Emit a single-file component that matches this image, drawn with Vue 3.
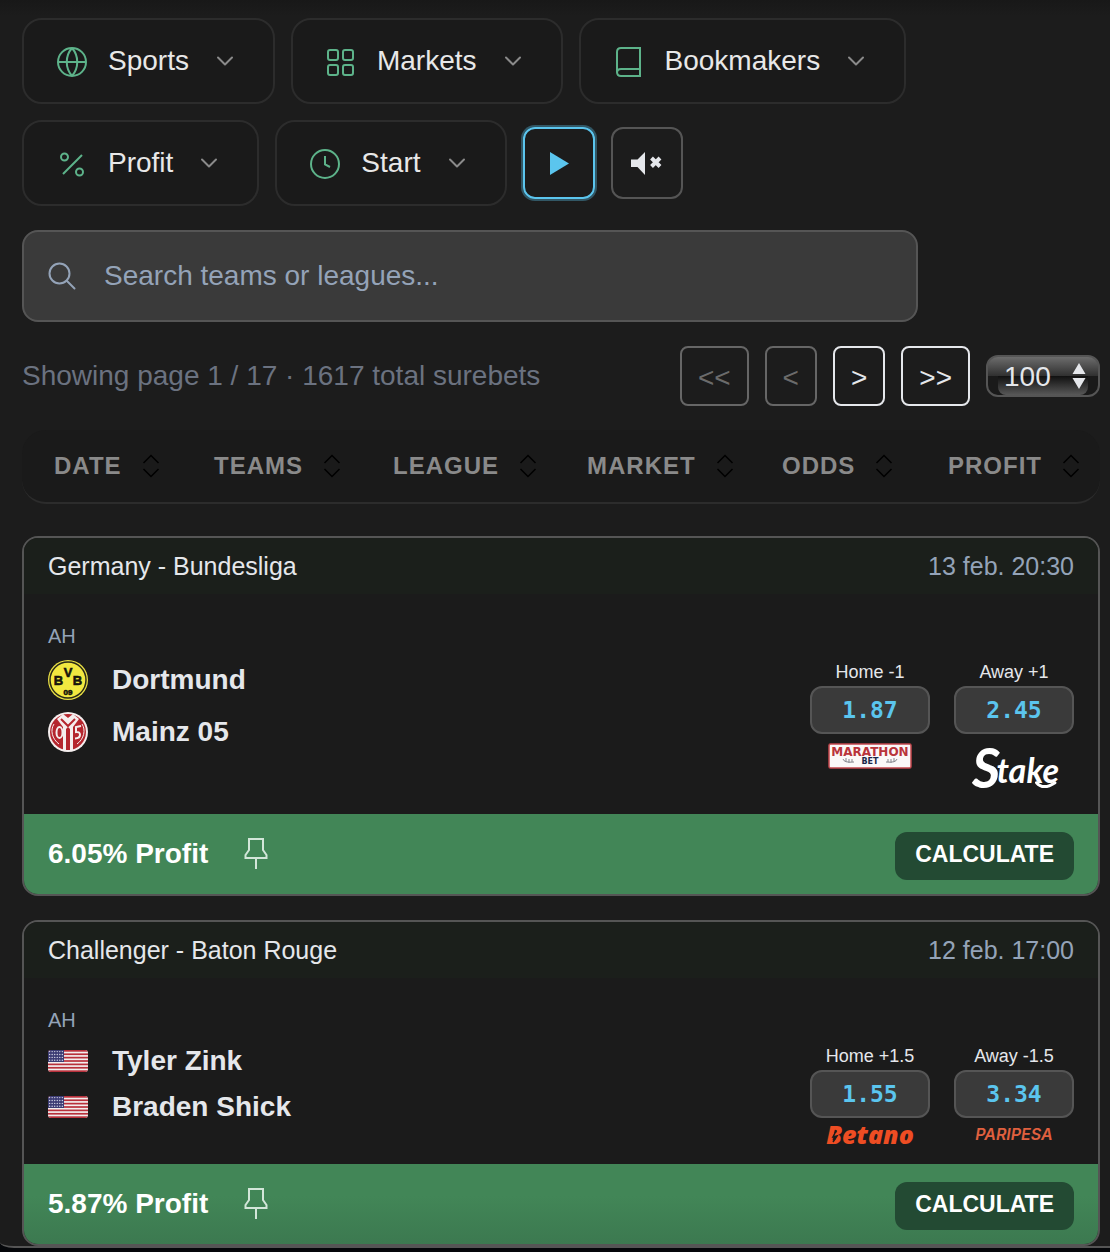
<template>
  <main class="page">
    <div class="filters">
      <button v-for="f in filters" :key="f.label" type="button" class="filter-btn">
        <svg class="filter-icon" viewBox="0 0 32 32" aria-hidden="true">
          <path :d="f.icon" />
        </svg>
        <span>{{ f.label }}</span>
        <svg class="chevron" viewBox="0 0 32 32" aria-hidden="true">
          <path d="M9 12.5l7 7 7-7" />
        </svg>
      </button>

      <button
        type="button"
        class="square-btn"
        :class="{ active: live }"
        aria-label="Live updates"
        @click="live = !live"
      >
        <svg viewBox="0 0 32 32" aria-hidden="true">
          <path d="M7 5v23l19-11.500z" />
        </svg>
      </button>
      <button type="button" class="square-btn" aria-label="Sound" @click="muted = !muted">
        <svg viewBox="0 0 32 32" aria-hidden="true">
          <path d="M0 12.5h6.500L14 5v23l-7.500-8H0z" />
          <path v-if="muted" class="mute-x" d="M20.500 11l8.500 8.500m0-8.500l-8.500 8.500" />
        </svg>
      </button>
    </div>

    <div class="search">
      <svg viewBox="0 0 28 28" aria-hidden="true">
        <circle cx="11.500" cy="11.500" r="10" />
        <path d="M19 19l7.500 7.500" />
      </svg>
      <input
        v-model="query"
        type="text"
        aria-label="Search teams or leagues"
        placeholder="Search teams or leagues..."
      />
    </div>

    <div class="pager">
      <p class="pager-info">Showing page 1 / 17 · 1617 total surebets</p>
      <div class="pager-controls">
        <button type="button" disabled aria-label="First page">&lt;&lt;</button>
        <button type="button" disabled aria-label="Previous page">&lt;</button>
        <button type="button" aria-label="Next page">&gt;</button>
        <button type="button" aria-label="Last page">&gt;&gt;</button>
        <div class="page-size">
          <select v-model="pageSize" aria-label="Rows per page">
            <option>50</option>
            <option>100</option>
            <option>200</option>
          </select>
          <svg viewBox="0 0 14 26" aria-hidden="true">
            <path d="M7 0l6.500 11H.5zM7 26l6.500-11H.5z" />
          </svg>
        </div>
      </div>
    </div>

    <div class="sort-bar">
      <button v-for="col in columns" :key="col" type="button">
        {{ col }}
        <svg viewBox="0 0 24 24" aria-hidden="true">
          <path d="M4.500 9L12 1.500 19.500 9M4.500 15l7.500 7.500 7.500-7.500" />
        </svg>
      </button>
    </div>

    <div class="cards">
      <article v-for="bet in bets" :key="bet.league" class="card">
        <header class="card-head">
          <span>{{ bet.league }}</span>
          <time>{{ bet.date }}</time>
        </header>

        <div class="card-body">
          <div class="match">
            <div class="market">{{ bet.market }}</div>
            <div v-for="team in bet.teams" :key="team.name" class="team">
              <svg v-if="team.logo === 'bvb'" class="crest" viewBox="0 0 40 40" aria-hidden="true">
                <circle cx="20" cy="20" r="20" fill="#e9e045" />
                <circle cx="20" cy="20" r="18" fill="#f2e840" stroke="#2a2a18" stroke-width="1.500" />
                <g fill="#15140c" stroke="#15140c" stroke-width="0.600" font-family="Liberation Sans, sans-serif" font-weight="700" text-anchor="middle">
                  <text x="10.500" y="25" font-size="13">B</text>
                  <text x="20" y="17" font-size="13">V</text>
                  <text x="29.500" y="25" font-size="13">B</text>
                  <text x="20" y="35" font-size="8">09</text>
                </g>
              </svg>
              <svg v-else-if="team.logo === 'mainz'" class="crest" viewBox="0 0 40 40" aria-hidden="true">
                <circle cx="20" cy="20" r="20" fill="#f5eeee" />
                <circle cx="20" cy="20" r="18" fill="#b5262e" />
                <path d="M15 2l5 4 5-4 6 5-6 8v23h-3V17l-2-2-2 2v21h-3V15L9 7z" fill="#f5eeee" />
                <path d="M13 7l7 7 7-7" fill="none" stroke="#b5262e" stroke-width="2" />
                <path d="M20 18v20" stroke="#b5262e" stroke-width="4" />
                <ellipse cx="11.500" cy="20.500" rx="3" ry="5.500" fill="none" stroke="#f5eeee" stroke-width="2" />
                <path d="M33 14l-5 1v5c5-1 6 6-1 6.500" fill="none" stroke="#f5eeee" stroke-width="2" />
                <path d="M6 12c-4 6-2 15 5 20M34 12c4 6 2 15-5 20" fill="none" stroke="#f5eeee" stroke-width="1" />
              </svg>
              <svg v-else class="flag" viewBox="0 0 40 22" aria-hidden="true">
                <rect width="40" height="22" fill="#f3eeee" />
                <rect
                  v-for="n in 7"
                  :key="n"
                  :y="(n - 1) * 3.385"
                  width="40"
                  height="1.700"
                  fill="#b8303b"
                />
                <rect width="16" height="12" fill="#3d3d75" />
                <g fill="#d5d5e6">
                  <circle
                    v-for="n in 24"
                    :key="n"
                    :cx="1.6 + ((n - 1) % 6) * 2.55"
                    :cy="1.6 + Math.floor((n - 1) / 6) * 2.9"
                    r="0.700"
                  />
                </g>
              </svg>
              <span>{{ team.name }}</span>
            </div>
          </div>

          <div class="odds">
            <div v-for="odd in bet.odds" :key="odd.label" class="odd">
              <span class="odd-label">{{ odd.label }}</span>
              <button type="button" class="odd-value">{{ odd.value }}</button>

              <svg v-if="odd.book === 'marathon'" class="book" viewBox="0 0 84 28" height="28" role="img" aria-label="Marathon Bet">
                <rect x="1" y="2" width="82" height="24" rx="1.500" fill="#fbf8f8" stroke="#c4474d" stroke-width="1.500" />
                <text x="42" y="14" fill="#b9343b" font-family="DejaVu Sans, sans-serif" font-size="12" font-weight="700" text-anchor="middle">MARATHON</text>
                <text x="42" y="22" fill="#1c2749" font-family="DejaVu Sans, sans-serif" font-size="8" font-weight="700" text-anchor="middle">BET</text>
                <path d="M15 17q1 4 11 3M69 17q-1 4-11 3M18 16v4M21 17v4M24 17v3M66 16v4M63 17v4M60 17v3" fill="none" stroke="#85858c" />
              </svg>
              <svg v-else-if="odd.book === 'stake'" class="book" viewBox="0 0 86 56" height="56" role="img" aria-label="Stake">
                <g fill="#fff" font-family="Lato, sans-serif" font-style="italic" font-weight="700">
                  <text x="0" y="46" font-size="56">S</text>
                  <text x="25" y="41" font-size="35">take</text>
                </g>
                <path d="M66 41q7 8 19 0" fill="none" stroke="#fff" stroke-width="3" stroke-linecap="round" />
              </svg>
              <svg v-else-if="odd.book === 'betano'" class="book" viewBox="0 0 84 22" height="22" role="img" aria-label="Betano">
                <text x="42" y="18" fill="#ee4d23" font-family="Open Sans, sans-serif" font-size="25" font-style="italic" font-weight="800" text-anchor="middle">Betano</text>
                <path d="M8 5l-3 6 4-1-4 6" fill="none" stroke="#1b1b1b" stroke-width="1.500" />
              </svg>
              <svg v-else class="book" viewBox="0 0 84 22" height="22" role="img" aria-label="Paripesa">
                <text x="42" y="14" fill="#e0603f" font-family="Inter, sans-serif" font-size="16" font-style="italic" font-weight="600" text-anchor="middle">PARIPESA</text>
              </svg>
            </div>
          </div>
        </div>

        <footer class="card-foot">
          <strong>{{ bet.profit }} Profit</strong>
          <button type="button" class="pin" aria-label="Pin surebet">
            <svg viewBox="0 0 24 32" aria-hidden="true">
              <path d="M5 1h14v11l3.500 5v3h-21v-3L5 12zM12 20v11" />
            </svg>
          </button>
          <button type="button" class="calculate">CALCULATE</button>
        </footer>
      </article>
    </div>
  </main>
</template>

<script setup>
import { ref } from 'vue'

const live = ref(true)
const muted = ref(true)
const query = ref('')
const pageSize = ref('100')

const filters = [
  {
    label: 'Sports',
    icon: 'M30 17a14 14 0 1 1-28 0a14 14 0 1 1 28 0zM2 17h28M16 3c-7 8-7 20 0 28M16 3c7 8 7 20 0 28',
  },
  {
    label: 'Markets',
    icon: 'M5 5h6q2 0 2 2v6q0 2-2 2H5q-2 0-2-2V7q0-2 2-2zM20 5h6q2 0 2 2v6q0 2-2 2h-6q-2 0-2-2V7q0-2 2-2zM5 20h6q2 0 2 2v6q0 2-2 2H5q-2 0-2-2v-6q0-2 2-2zM20 20h6q2 0 2 2v6q0 2-2 2h-6q-2 0-2-2v-6q0-2 2-2z',
  },
  {
    label: 'Bookmakers',
    icon: 'M27 24V3H8Q4 3 4 7v20Q4 31 8 31h19v-7H8q-4 0-4 4',
  },
  {
    label: 'Profit',
    icon: 'M26 8L7 27M12 10a3.500 3.500 0 1 1-7 0a3.500 3.500 0 1 1 7 0zM27 25a3.500 3.500 0 1 1-7 0a3.500 3.500 0 1 1 7 0z',
  },
  {
    label: 'Start',
    icon: 'M30 17a14 14 0 1 1-28 0a14 14 0 1 1 28 0zM16 9v8.500l5 2.500',
  },
]

const columns = ['DATE', 'TEAMS', 'LEAGUE', 'MARKET', 'ODDS', 'PROFIT']

const bets = [
  {
    league: 'Germany - Bundesliga',
    date: '13 feb. 20:30',
    market: 'AH',
    teams: [
      { name: 'Dortmund', logo: 'bvb' },
      { name: 'Mainz 05', logo: 'mainz' },
    ],
    odds: [
      { label: 'Home -1', value: '1.87', book: 'marathon' },
      { label: 'Away +1', value: '2.45', book: 'stake' },
    ],
    profit: '6.05%',
  },
  {
    league: 'Challenger - Baton Rouge',
    date: '12 feb. 17:00',
    market: 'AH',
    teams: [
      { name: 'Tyler Zink', logo: 'us' },
      { name: 'Braden Shick', logo: 'us' },
    ],
    odds: [
      { label: 'Home +1.5', value: '1.55', book: 'betano' },
      { label: 'Away -1.5', value: '3.34', book: 'paripesa' },
    ],
    profit: '5.87%',
  },
]
</script>

<style>
body {
  margin: 0;
  background: #05070a;
}
</style>

<style scoped>
.page {
  box-sizing: border-box;
  padding: 18px 10px 0 22px;
  background: linear-gradient(180deg, #181818, #1c1c1c 16px);
  border-bottom: 2px solid #555;
  border-bottom-left-radius: 14px 6px;
  color: #e5e7eb;
  font-family: 'Liberation Sans', Helvetica, Arial, sans-serif;
  font-size: 28px;
}

button,
input,
select {
  font: inherit;
  color: inherit;
  margin: 0;
}

button {
  background: none;
  cursor: pointer;
}

svg {
  flex: none;
}

/* filters */
.filters {
  display: flex;
  flex-wrap: wrap;
  align-items: center;
  gap: 16px;
  max-width: 900px;
}

.filter-btn {
  display: flex;
  align-items: center;
  gap: 20px;
  height: 86px;
  padding: 0 32px;
  border: 2px solid #2c2c2c;
  border-radius: 20px;
  background: #1a1a1a;
  color: #e8e8e8;
}

.filter-icon,
.chevron {
  width: 32px;
  height: 32px;
  fill: none;
  stroke: #5db38a;
  stroke-width: 2;
}

.chevron {
  stroke: #8a8a8a;
  stroke-linecap: round;
  stroke-linejoin: round;
}

.square-btn {
  display: flex;
  align-items: center;
  justify-content: center;
  width: 72px;
  height: 72px;
  padding: 0;
  border: 2px solid #555;
  border-radius: 12px;
}

.square-btn.active {
  border-color: #5bc5ee;
  color: #5bc5ee;
  box-shadow: 0 0 0 2px rgba(91, 197, 238, 0.35);
}

.square-btn svg {
  width: 32px;
  height: 32px;
  fill: currentColor;
}

.mute-x {
  stroke: currentColor;
  stroke-width: 4;
}

/* search */
.search {
  display: flex;
  align-items: center;
  gap: 28px;
  box-sizing: border-box;
  max-width: 896px;
  height: 92px;
  margin-top: 24px;
  padding: 0 24px;
  border: 2px solid #555;
  border-radius: 16px;
  background: #3a3a3a;
}

.search svg {
  width: 28px;
  height: 28px;
  fill: none;
  stroke: #94a3b8;
  stroke-width: 2;
  stroke-linecap: round;
}

.search input {
  flex: 1;
  min-width: 0;
  padding: 0;
  border: none;
  outline: none;
  background: none;
}

.search input::placeholder {
  color: #94a3b8;
  opacity: 1;
}

/* pagination */
.pager {
  display: flex;
  align-items: center;
  justify-content: space-between;
  margin-top: 24px;
}

.pager-info {
  margin: 0;
  color: #6b7280;
}

.pager-controls {
  display: flex;
  align-items: center;
  gap: 16px;
}

.pager-controls button {
  height: 60px;
  padding: 4px 16px 0;
  border: 2px solid #e5e7eb;
  border-radius: 8px;
}

.pager-controls button:disabled {
  border-color: #666;
  color: #6b6b6b;
}

.page-size {
  position: relative;
  box-sizing: border-box;
  width: 114px;
  height: 42px;
  border: 2px solid #555;
  border-radius: 12px;
  background: linear-gradient(180deg, #6c6c6c, #303030 50%, #1a1a1a 50%);
}

.page-size::before {
  content: '';
  position: absolute;
  inset: 50% 10px 0;
  border-radius: 0 0 8px 8px;
  background: linear-gradient(180deg, #101010, #585858);
}

.page-size select {
  position: relative;
  width: 100%;
  height: 100%;
  padding: 0 0 0 16px;
  border: none;
  background: none;
  appearance: none;
}

.page-size svg {
  position: absolute;
  top: 6px;
  right: 12px;
  width: 14px;
  height: 26px;
  fill: #e5e7eb;
  pointer-events: none;
}

/* sort bar */
.sort-bar {
  display: grid;
  grid-template-columns: 160fr 179fr 194fr 195fr 166fr 152fr;
  height: 72px;
  margin-top: 24px;
  padding-left: 32px;
  border-bottom: 2px solid #2c2c2c;
  border-radius: 24px;
  background: #1a1a1a;
}

.sort-bar button {
  display: flex;
  align-items: center;
  gap: 17px;
  padding: 0;
  border: none;
  color: #8a8a8a;
  font-size: 24px;
  font-weight: 700;
  letter-spacing: 1px;
}

.sort-bar svg {
  width: 24px;
  height: 24px;
  fill: none;
  stroke: #000;
  stroke-width: 1.5;
}

/* cards */
.cards {
  display: flex;
  flex-direction: column;
  gap: 24px;
  margin-top: 32px;
}

.card {
  overflow: hidden;
  border: 2px solid #555;
  border-radius: 16px;
  background: #1b1b1b;
}

.card-head {
  display: flex;
  align-items: center;
  justify-content: space-between;
  height: 56px;
  padding: 0 24px;
  background: #1b1f1b;
  font-size: 25px;
}

.card-head time {
  color: #94a3b8;
}

.card-body {
  display: flex;
  justify-content: space-between;
  padding: 30px 24px 16px;
}

.match {
  display: flex;
  flex-direction: column;
  gap: 12px;
}

.market {
  color: #94a3b8;
  font-size: 20px;
  line-height: 24px;
}

.team {
  display: flex;
  align-items: center;
  gap: 24px;
  font-weight: 700;
  line-height: 34px;
}

.crest {
  width: 40px;
  height: 40px;
}

.flag {
  width: 40px;
  height: 22px;
  border-radius: 3px;
}

.odds {
  display: flex;
  gap: 24px;
  padding-top: 36px;
}

.odd {
  display: flex;
  flex-direction: column;
  align-items: center;
  width: 120px;
}

.odd-label {
  font-size: 18px;
  line-height: 24px;
}

.odd-value {
  width: 100%;
  height: 48px;
  margin: 2px 0 8px;
  padding: 0;
  border: 2px solid #555;
  border-radius: 12px;
  background: #3a3a3a;
  color: #5bc5ee;
  font-family: 'DejaVu Sans Mono', monospace;
  font-size: 23px;
  font-weight: 700;
}

.book {
  width: 84px;
  overflow: visible;
}

.card-foot {
  display: flex;
  align-items: center;
  height: 80px;
  padding: 0 24px;
  background: #428657;
  color: #fff;
}

.card:last-child .card-foot {
  background: linear-gradient(180deg, #428657 40%, #3c7950);
}

.pin {
  display: flex;
  margin-left: 36px;
  padding: 0;
  border: none;
}

.pin svg {
  width: 24px;
  height: 32px;
  fill: none;
  stroke: #d3e6d9;
  stroke-width: 2;
}

.calculate {
  height: 48px;
  margin-top: 4px;
  margin-left: auto;
  padding: 0 20px 4px;
  border: none;
  border-radius: 12px;
  background: #234a33;
  font-size: 23px;
  font-weight: 700;
}
</style>
